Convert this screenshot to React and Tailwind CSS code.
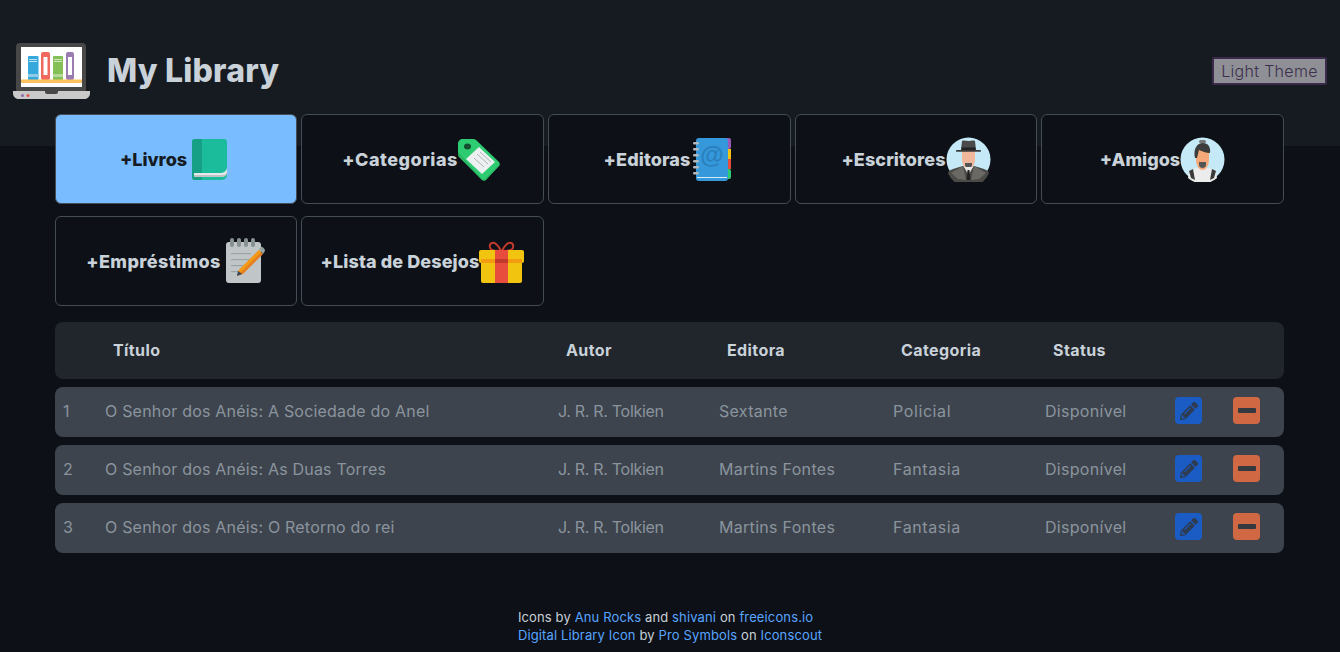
import { FaPencilAlt } from "react-icons/fa";

const LaptopLogo = () => (
  <svg viewBox="0 0 77 56" className="w-[77px] h-[56px] shrink-0">
    <rect x="3" y="0" width="70" height="50" rx="4" fill="#474747" />
    <rect x="8" y="4" width="61" height="40" fill="#fff" />
    <rect x="15" y="13" width="10.500" height="24" rx="1" fill="#35a8dc" />
    <rect x="16" y="16" width="8" height="1" fill="#bfe3f3" />
    <rect x="16" y="18" width="8" height="1" fill="#bfe3f3" />
    <rect x="15" y="31" width="10.500" height="3" fill="#8fcbe6" />
    <rect x="28" y="9" width="9" height="28" rx="2" fill="#f0695f" />
    <rect x="30.500" y="14" width="4" height="18" fill="#fff" />
    <rect x="40" y="13" width="10" height="24" rx="1" fill="#85bf58" />
    <rect x="41" y="16" width="8" height="1" fill="#d3e8c2" />
    <rect x="41" y="18" width="8" height="1" fill="#d3e8c2" />
    <rect x="40" y="31" width="10" height="3" fill="#b4d89a" />
    <rect x="53" y="9" width="8" height="28" rx="2" fill="#9a7cb3" />
    <rect x="55" y="14" width="4" height="18" fill="#fff" />
    <rect x="8" y="36.500" width="61" height="3.500" fill="#fbc25f" />
    <path d="M0 48h77v2c0 4-3 6-6 6H6c-3 0-6-2-6-6z" fill="#c9c9c9" />
    <path d="M32 48h13v1c0 1-1 2-2 2H34c-1 0-2-1-2-2z" fill="#474747" />
    <circle cx="9.500" cy="52.500" r="1.500" fill="#8e6bb0" />
    <circle cx="15" cy="52.500" r="1.500" fill="#e0574f" />
  </svg>
);

const BookIcon = () => (
  <svg viewBox="0 0 45 45" className="w-[45px] h-[45px] shrink-0">
    <path d="M5 5a3 3 0 0 1 3-3h29a3 3 0 0 1 3 3v33a5 5 0 0 1-5 5H8a3 3 0 0 1-3-3z" fill="#1abc9c" />
    <path d="M5 5a3 3 0 0 1 3-3h7v41H8a3 3 0 0 1-3-3z" fill="#16a085" />
    <path d="M7 36h26c3 0 6-1 7-5v4c0 3-3 5-6 5H7z" fill="#e4e8e8" />
    <path d="M7 38h28c2 0 4-1 5-2v1c-1 2-3 3-5 3H7z" fill="#bdc3c7" />
  </svg>
);

const TagIcon = () => (
  <svg viewBox="0 0 45 45" className="w-[45px] h-[45px] shrink-0">
    <path d="M0 7c0-3 2-5 5-5h9c2 0 3 0 4 1l23 22c1 1 1 3 0 4L28 43c-1 1-3 1-4 0L2 21c-1-1-2-2-2-4z" fill="#2ecc71" />
    <path d="M0 15l24 27c1 1 3 1 4 0l13-13 1-2c-1 1-15 15-15 15-1 1-3 1-4 0L0 17z" fill="#27ae60" />
    <ellipse cx="9.500" cy="9.500" rx="3.500" ry="3" fill="#14502f" />
    <path d="M21 10l16 15-13 12-16-15z" fill="#ecf0f1" />
    <path d="M19 17l11 10M22 15l11 10M16 21l10 9" stroke="#9aa5a8" strokeWidth="0.800" />
  </svg>
);

const AddressBookIcon = () => (
  <svg viewBox="0 0 45 45" className="w-[45px] h-[45px] shrink-0">
    <rect x="34" y="1" width="7" height="11" rx="2" fill="#9b59b6" />
    <rect x="36" y="12" width="5" height="10" fill="#f1c40f" />
    <rect x="36" y="22" width="5" height="10" fill="#e74c3c" />
    <rect x="36" y="32" width="5" height="10" rx="2" fill="#2ecc71" />
    <rect x="6" y="1" width="32" height="43" rx="3" fill="#3498db" />
    <rect x="7" y="40" width="30" height="1" fill="#d6ecf8" />
    <text x="22" y="26" textAnchor="middle" fontFamily="Liberation Sans, sans-serif" fontSize="24" fontWeight="700" fill="#2a80bd">@</text>
    {[5, 11, 17, 23, 29, 35].map((y) => (
      <rect key={y} x="3" y={y} width="6" height="2.500" rx="1.200" fill="#b0b8bc" />
    ))}
  </svg>
);

const SpyIcon = () => (
  <svg viewBox="0 0 45 45" className="w-[45px] h-[45px] shrink-0">
    <circle cx="22.500" cy="22.500" r="22" fill="#c5e9f6" />
    <path d="M16 13h13v9c0 6-3 10-6.500 10S16 28 16 22z" fill="#f0b79a" />
    <path d="M19 26h7v2c0 2-2 3-3.500 3S19 30 19 28z" fill="#555" />
    <path d="M16 4c2-1 4 0 6.500 0S27 3 29 4l1 9H15z" fill="#4a4a4a" />
    <rect x="10" y="13" width="25" height="1.800" rx="0.900" fill="#3a3a3a" />
    <rect x="15.500" y="10.500" width="14" height="2.500" fill="#232323" />
    <path d="M3 34c3-2 10-4 14-5l5.500 5 5.500-5c4 1 11 3 14 5l1 2a22 22 0 0 1-41 0z" fill="#4b4a47" />
    <path d="M18 30h9l-4.500 8z" fill="#e8e8e8" />
    <path d="M21.500 33h2l1 10h-4z" fill="#222" />
    <path d="M17 29l3 14-8-1-7-6z" fill="#6a6964" />
    <path d="M28 29l-3 14 8-1 7-6z" fill="#6a6964" />
  </svg>
);

const FriendIcon = () => (
  <svg viewBox="0 0 45 45" className="w-[45px] h-[45px] shrink-0">
    <circle cx="22.500" cy="22.500" r="22" fill="#c5e9f6" />
    <path d="M8 41l1-7c2-2 7-3 10-3h7c3 0 8 1 10 3l1 7a22 22 0 0 1-29 0z" fill="#ececec" />
    <path d="M9 34l4-2 2 11-4-2zM36 34l-4-2-2 11 4-2z" fill="#3a3a3a" />
    <path d="M16 13h13v10c0 5-3 10-6.500 10S16 28 16 23z" fill="#f5a878" />
    <path d="M19 25h7v3c0 2-2 3-3.500 3S19 30 19 28z" fill="#555" />
    <path d="M15 21c-2-9 2-15 8-15 5 0 8 4 7 10-4 0-8-2-11-3l-2 8z" fill="#3d3d3d" />
    <rect x="19" y="3" width="7" height="3" rx="1.500" fill="#777" />
  </svg>
);

const NotepadIcon = () => (
  <svg viewBox="0 0 45 46" className="w-[45px] h-[46px] shrink-0">
    <rect x="5" y="4" width="35" height="41" rx="3" fill="#c0c6c8" />
    {[9, 16, 23, 30].map((x) => (
      <rect key={x} x={x} y="0" width="4" height="9" rx="2" fill="#869292" />
    ))}
    {[15, 21, 27, 33].map((y) => (
      <rect key={y} x="10" y={y} width={y > 22 ? 12 : 20} height="1.200" fill="#9ba4a5" />
    ))}
    <path d="M38 12l4 4-20 20-6 2 2-6z" fill="#e67e22" />
    <path d="M38 12l2 2-20 20-3-1z" fill="#f39c12" />
    <path d="M38 11l2-2c1-1 4 2 4 4l-2 3z" fill="#95a5a6" />
    <path d="M17 33l4 3-5 2z" fill="#34495e" />
  </svg>
);

const GiftIcon = () => (
  <svg viewBox="0 0 45 45" className="w-[45px] h-[45px] shrink-0">
    <path d="M22 12c-3-6-6-9-9-8-3 1-3 5 0 7 2 1 6 1 9 1zM23 12c3-6 6-9 9-8 3 1 3 5 0 7-2 1-6 1-9 1z" fill="none" stroke="#c0392b" strokeWidth="2" />
    <rect x="2" y="14" width="41" height="30" rx="2" fill="#f1c40f" />
    <rect x="0" y="11" width="45" height="13" rx="2" fill="#f1c40f" />
    <rect x="2" y="20" width="41" height="4" fill="#f39c12" />
    <rect x="16" y="11" width="13" height="33" fill="#e74c3c" />
    <rect x="16" y="20" width="13" height="4" fill="#c0392b" />
  </svg>
);

const actions = [
  [
    { label: "+Livros", icon: <BookIcon />, active: true, track: "tracking-[0px]" },
    { label: "+Categorias", icon: <TagIcon />, track: "tracking-[0.5px]" },
    { label: "+Editoras", icon: <AddressBookIcon />, track: "tracking-[0.1px]" },
    { label: "+Escritores", icon: <SpyIcon />, track: "tracking-[0.1px]" },
    { label: "+Amigos", icon: <FriendIcon />, track: "tracking-[0px]" },
  ],
  [
    { label: "+Empréstimos", icon: <NotepadIcon />, track: "tracking-[0.4px]" },
    { label: "+Lista de Desejos", icon: <GiftIcon />, track: "tracking-[0.1px]" },
  ],
];

const books = [
  { id: 1, title: "O Senhor dos Anéis: A Sociedade do Anel", author: "J. R. R. Tolkien", publisher: "Sextante", category: "Policial" },
  { id: 2, title: "O Senhor dos Anéis: As Duas Torres", author: "J. R. R. Tolkien", publisher: "Martins Fontes", category: "Fantasia" },
  { id: 3, title: "O Senhor dos Anéis: O Retorno do rei", author: "J. R. R. Tolkien", publisher: "Martins Fontes", category: "Fantasia" },
];

const ActionButton = ({ label, icon, active, track }) => (
  <button
    className={`h-[90px] rounded-md border border-[#444c56] flex items-center justify-center text-[18px] font-extrabold ${track} ${
      active ? "bg-[#79bcff] text-[#161b22]" : "bg-[#0d1117] text-[#c9d1d9]"
    }`}
  >
    <span>{label}</span>
    {icon}
  </button>
);

const Link = ({ children }) => <a className="text-[#58a6ff]">{children}</a>;

const App = () => {
  return (
    <div className="min-h-[652px] bg-[#0d1017] font-['Inter',sans-serif]">
      {/* Header */}
      <header className="h-[146px] bg-[#161b22] flex items-start justify-between pt-[43px] pl-[13px] pr-[13px]">
        <div className="flex items-center">
          <LaptopLogo />
          <h1 className="ml-[17px] text-[32px] leading-[56px] font-extrabold tracking-[0.2px] text-[#c9d1d9]">My Library</h1>
        </div>
        <button className="mt-[14px] h-[28px] w-[115px] rounded-[2px] border-2 border-[#3b2a4a] bg-[#8f9096] text-[#3d2f4d] text-[16px] font-light tracking-[0.3px]">
          Light Theme
        </button>
      </header>

      <main className="mx-[55px] mt-[-32px] w-[1229px]">
        {/* Cadastros */}
        <div className="flex flex-col gap-[12px]">
          {actions.map((row, i) => (
            <div key={i} className="grid grid-cols-[242px_243px_243px_242px_243px] gap-[4px]">
              {row.map((action) => (
                <ActionButton key={action.label} {...action} />
              ))}
            </div>
          ))}
        </div>

        {/* Tabela */}
        <div className="mt-[16px] h-[57px] pb-[2px] rounded-lg bg-[#21262d] grid grid-cols-[58px_453px_161px_174px_152px_1fr] items-center text-[#c9d1d9] text-[16px] font-bold tracking-[0.4px]">
          <span />
          <span>Título</span>
          <span>Autor</span>
          <span>Editora</span>
          <span>Categoria</span>
          <span>Status</span>
        </div>
        <div className="mt-[8px] flex flex-col gap-[8px]">
          {books.map((book) => (
            <div
              key={book.id}
              className="h-[50px] pb-[2px] rounded-lg bg-[#3d444d] grid grid-cols-[50px_453px_161px_174px_152px_130px_58px_27px] items-center text-[#8b949e] text-[16px] tracking-[0.3px]"
            >
              <span className="pl-[8px]">{book.id}</span>
              <span className="tracking-[0.2px]">{book.title}</span>
              <span className="tracking-[-0.3px]">{book.author}</span>
              <span>{book.publisher}</span>
              <span className="tracking-[0.6px]">{book.category}</span>
              <span>Disponível</span>
              <button className="mb-[1px] w-[27px] h-[27px] rounded-[4px] bg-[#1a5bc4] flex items-center justify-center text-[#2f3b4f]">
                <FaPencilAlt className="w-[18px] h-[18px]" />
              </button>
              <button className="mb-[1px] w-[27px] h-[27px] rounded-[4px] bg-[#d16844] flex items-center justify-center">
                <span className="w-[18px] h-[5px] rounded-[1px] bg-[#33393f]" />
              </button>
            </div>
          ))}
        </div>
      </main>

      <footer className="mt-[55px] mx-auto w-fit text-[13px] leading-[18px] tracking-[0.13px] text-[#c9d1d9]">
        <p>
          Icons by <Link>Anu Rocks</Link> and <Link>shivani</Link> on <Link>freeicons.io</Link>
        </p>
        <p>
          <Link>Digital Library Icon</Link> by <Link>Pro Symbols</Link> on <Link>Iconscout</Link>
        </p>
      </footer>
    </div>
  );
};

export default App;
